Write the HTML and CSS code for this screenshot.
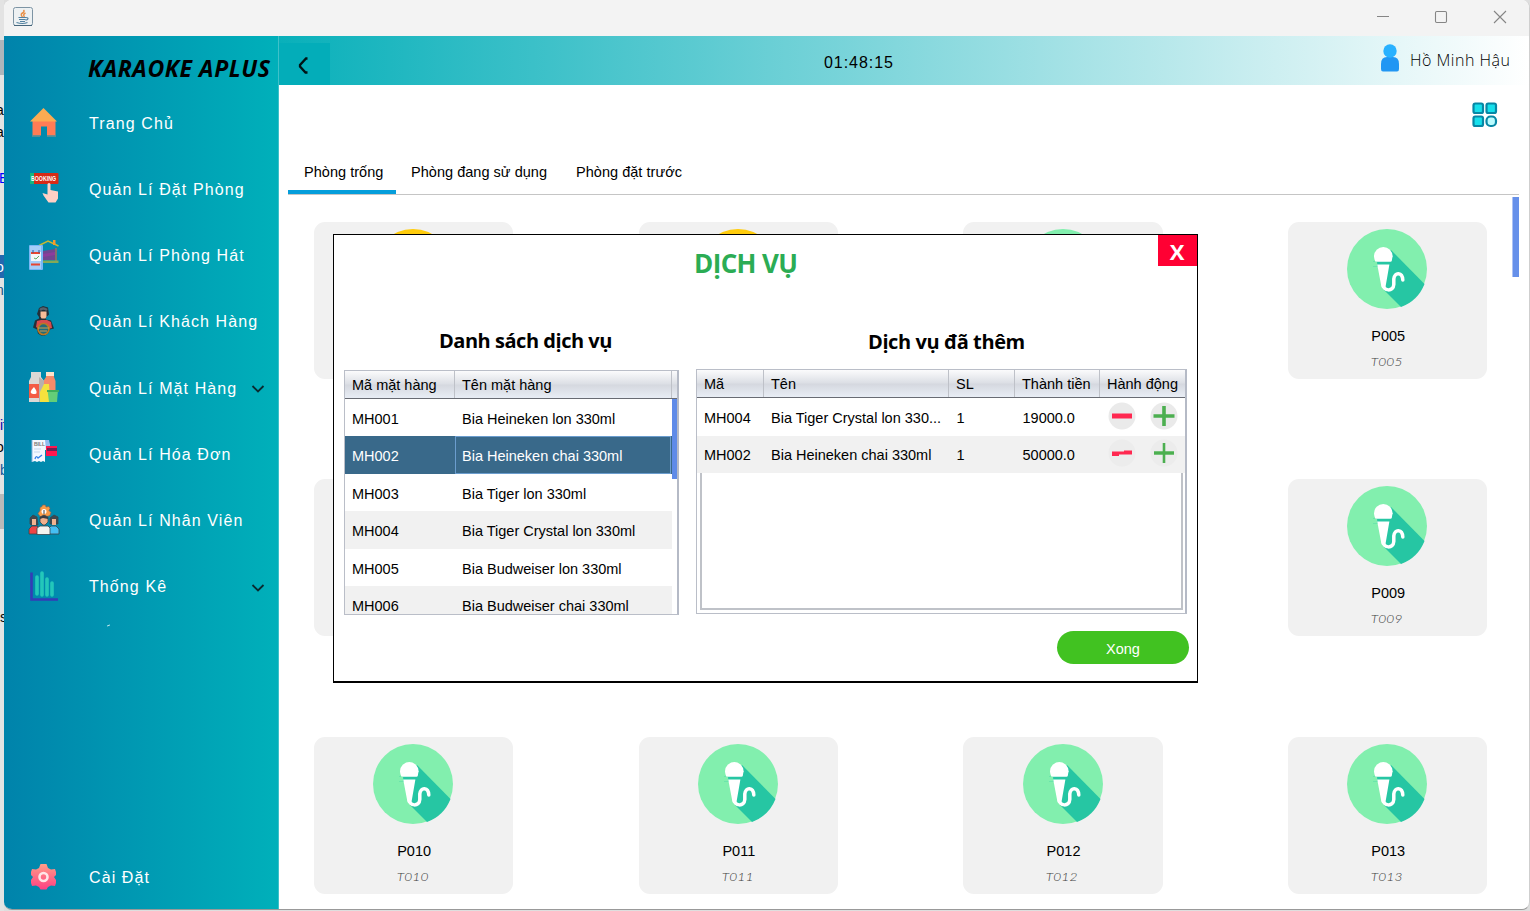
FILE: index.html
```html
<!DOCTYPE html>
<html lang="vi">
<head>
<meta charset="utf-8">
<title>Karaoke Aplus</title>
<link rel="stylesheet" href="styles.css">
</head>
<body>
<svg class="defs" width="0" height="0">
  <symbol id="mic" viewBox="0 0 80 80">
    <circle cx="40" cy="40" r="40" fill="#82efae"/>
    <path d="M44 21L77.500 55A40 40 0 0 1 54 78L37 61L30 34Z" fill="#26c6a3"/>
    <circle cx="36.300" cy="27.300" r="9.300" fill="#fff"/>
    <rect x="26" y="32.500" width="20" height="5" fill="#26c6a3"/>
    <path d="M26 32.500h4l.5 5h-4.500z" fill="#82efae"/>
    <path d="M27.500 27h17.800l-.8 5.500H28.200z" fill="#fff"/>
    <path d="M30.200 35.500h12.200L38.500 58q-3.500 3-4.200-1z" fill="#fff"/>
    <path d="M36 55C36 62.500 46.500 63 46.800 55.500V50C47.500 42.500 55.500 43 55.800 51" fill="none" stroke="#fff" stroke-width="3.500" stroke-linecap="round"/>
  </symbol>
  <symbol id="plain" viewBox="0 0 80 80"><circle cx="40" cy="40" r="40" fill="#ffcc0c"/></symbol>
  <symbol id="down" viewBox="0 0 14 8"><path d="M1.500 1L7 6.500L12.500 1" fill="none" stroke="#0a2a30" stroke-width="1.800"/></symbol>
  <symbol id="minus" viewBox="0 0 28 28"><circle cx="14" cy="14" r="13.500" fill="#eaeaea"/><path d="M4 14h20" stroke="#ff2850" stroke-width="5"/></symbol>
  <symbol id="minus2" viewBox="0 0 28 28"><circle cx="14" cy="14" r="13.500" fill="#ececec"/><path d="M4 12.500h12V11.500h8V15.500h-13v1.500H4z" fill="#ff2850"/></symbol>
  <symbol id="plus" viewBox="0 0 28 28"><circle cx="14" cy="14" r="13.500" fill="#eaeaea"/><path d="M3.500 14h21M14 4v20" stroke="#4caf50" stroke-width="3.600"/></symbol>
  <symbol id="plus2" viewBox="0 0 28 28"><circle cx="14" cy="14" r="13.500" fill="#ececec"/><path d="M4 14h20" stroke="#83c886" stroke-width="4"/><path d="M4 14h20M14 4v20" stroke="#4caf50" stroke-width="2.600"/></symbol>
</svg>

<div class="desktop">
  <div class="behind">
    <i class="block tab"></i><i class="block sel"></i><i class="block thumb"></i>
    <span class="frag f1">a</span><span class="frag f2">a</span><span class="frag f3">E</span>
    <span class="frag f4">o</span><span class="frag f5">n</span><span class="frag f6">it</span>
    <span class="frag f7">o</span><span class="frag f8">b</span><span class="frag f9">s</span>
  </div>
  <div class="window">
    <header class="titlebar">
      <svg class="java" width="20" height="20" viewBox="0 0 20 20">
        <rect x=".5" y=".5" width="19" height="18" rx="2" fill="#edf1f3" stroke="#7d94a4"/>
        <path d="M1 18.500h18" stroke="#46677d"/>
        <path d="M10.500 3Q12 4.500 9.500 6T9.500 10M12.500 6Q9.500 7.500 11.500 10" fill="none" stroke="#e8914a" stroke-width="1.500"/>
        <path d="M5.500 10.500h8M6 12.500h6.500M7 14.500h5M13 10.500q3 0 1.500 2l-2 .8M3.500 15.500q6 2 11 0" fill="none" stroke="#5382a1" stroke-width="1.200"/>
      </svg>
      <svg class="winbtns" width="134" height="16" viewBox="0 0 134 16" fill="none" stroke="#858585" stroke-width="1.100">
        <path d="M1 8.500h12"/><rect x="59.500" y="3.500" width="11" height="11" rx="1.200"/><path d="M118 3l12 12M130 3l-12 12"/>
      </svg>
    </header>
    <div class="main">
      <nav class="sidebar">
        <h1 class="brand">KARAOKE APLUS</h1>
        <div class="menu">
          <div class="item">
            <svg class="icon" viewBox="0 0 30 30"><path d="M3.500 14h23v14.500H18v-9h-6v9H3.500z" fill="#ff7c55" /><path d="M14.500 1L1 14.500h27z" fill="#fcab52"/><path d="M3 29h8M18 29h9" stroke="#6f8e91" stroke-width="1.500"/></svg>
            <span>Trang Chủ</span></div>
          <div class="item">
            <svg class="icon" viewBox="0 0 30 30"><rect x="1" width="28.500" height="11" rx="1" fill="#d72b16"/><path d="M1 0h4v11H1z" fill="#16b57e"/><text x="2" y="8.200" font-size="6.500" textLength="25" lengthAdjust="spacingAndGlyphs" class="booking">BOOKING</text><path d="M18.500 11q1.500-2 3 0v6l7.500 1.500v7l-2.500 4h-7l-5-7-1-2.500 5 1.500z" fill="#ffd0c5"/></svg>
            <span>Quản Lí Đặt Phòng</span></div>
          <div class="item">
            <svg class="icon" viewBox="0 0 30 30"><path d="M10 5.500L19 1l10.500 5" fill="none" stroke="#c5b833" stroke-width="1.400"/><path d="M24 0h2.500v5H24z" fill="#f79a2c"/><path d="M14 11l12-2v11H14z" fill="#704692"/><path d="M14 14l12-2v3l-12 2z" fill="#8c3c9c"/><path d="M27 8v13" stroke="#a96b59" stroke-width="1.500"/><path d="M13 20.500h16.500V23H13z" fill="#83a957"/><rect y="5" width="14" height="25" rx="1" fill="#78b7f5"/><path d="M1 6h11v23H1z" fill="#a5cdf7"/><rect x="2" y="12" width="10" height="9" fill="#f4f6f8"/><path d="M2 13h9M2 24.500h9" stroke="#e8452f" stroke-width="2"/><path d="M4 10v3M10 10v3" stroke="#335c9d"/><path d="M5 18l2 1 3-3" fill="none" stroke="#61aa67"/></svg>
            <span>Quản Lí Phòng Hát</span></div>
          <div class="item">
            <svg class="icon" viewBox="0 0 30 30"><path d="M10 2l4-2 5 1.500 1 7-3 3v2l5 1 3 8-4 1-2 4-3 2h-4l-3-2-1-4-4-2 2-7 4-2V11l-2-3z" fill="#233039"/><path d="M11.500 5.500h6v5l-1 2h-4l-1-2z" fill="#f7bd98"/><path d="M8 15l4-1h6l4 2 1 6-4 1-4-5-5 5-3-2z" fill="#d84b4e"/><circle cx="14.500" cy="23" r="5.500" fill="#236b78" stroke="#ba7921" stroke-width="1.700"/><path d="M9 22h11M11 25h7" stroke="#d19b50"/><path d="M11 4q3-3 7 0" stroke="#59626d" stroke-width="2.500" fill="none"/></svg>
            <span>Quản Lí Khách Hàng</span></div>
          <div class="item">
            <svg class="icon" viewBox="0 0 30 30"><path d="M2 0h10v5l3 4v21H0V9l2-4z" fill="#dcd8d5"/><path d="M10 5l5 4v21h-5z" fill="#b7b1ad"/><rect y="12" width="10" height="14" fill="#f45b45"/><path d="M5 15q6 8-1 7-5-1 1-7" fill="#fff"/><path d="M17 0h8v5l1.500 4v10H15V8l2-3z" fill="#f58b6a"/><path d="M17 0h8v4h-8z" fill="#ffe3ca"/><path d="M15 12h5l1 18H11V20z" fill="#f5e13d"/><path d="M18.500 18H29l-1 12h-8z" fill="#63ce78"/><path d="M18 18h12v2H18z" fill="#3cae5a"/></svg>
            <span>Quản Lí Mặt Hàng</span><svg class="chev" width="14" height="8"><use href="#down"/></svg></div>
          <div class="item">
            <svg class="icon" viewBox="0 0 30 30"><path d="M3 2h15l3 5v5H16v12l-2-1-2 1-2-1-2 1-2-1-3 1z" fill="#f4f8ff"/><path d="M16 2h4l1 5v5h-4z" fill="#91bbef"/><path d="M3 2v22" stroke="#86b3df"/><text x="5" y="7.500" font-size="5" class="bill">BILL</text><path d="M5 11h7M5 14h6" stroke="#c3d7ee"/><path d="M6 21q1-4 3-1l4-3" fill="none" stroke="#3480ea" stroke-width="1.300"/><path d="M17 8h11v10H17z" fill="#ff164f"/><path d="M18 10h10v3H18z" fill="#6c2454"/></svg>
            <span>Quản Lí Hóa Đơn</span></div>
          <div class="item">
            <svg class="icon" viewBox="0 0 30 30"><path d="M13.500 0h3l.5 2 3-.5 1 2-1 2 2 2-1 3-3 1-3 1-4-1-2-3 2-3 0-3 2-1z" fill="#f79b47" stroke="#7b655a" stroke-width=".7"/><circle cx="15" cy="6.500" r="2.500" fill="#fff"/><path d="M15 5v4" stroke="#444"/><g stroke="#38454c" stroke-width=".8"><path d="M0 29v-5l3-3h5l2 2v6z" fill="#ee4545"/><path d="M20 29v-6l2-2h5l3 3v5z" fill="#46bff3"/><path d="M8 29.500V23l3-2h8l2 2v6.500z" fill="#f4f3ef"/><path d="M1 19v-6l3-3 4 2 1 8H2zM21 19v-6l4-3 4 2v7z" fill="#42484e"/><path d="M11 17v-5l4-2 4 2v5l-3 3h-2z" fill="#f0b08c"/></g><path d="M3 14h4v6H3zM23 14h4v6h-4z" fill="#f2b390"/><path d="M11 14v-2l4-2 4 2v2l-5-1z" fill="#383d43"/></svg>
            <span>Quản Lí Nhân Viên</span></div>
          <div class="item">
            <svg class="icon" viewBox="0 0 30 30"><path d="M2.500 1.500v27H29" fill="none" stroke="#353bb6" stroke-width="2.600"/><path d="M8 6v17M13 2v22M18 8v16M23 12v12" stroke="#23c7ba" stroke-width="3.600" stroke-linecap="round"/></svg>
            <span>Thống Kê</span><svg class="chev" width="14" height="8"><use href="#down"/></svg></div>
        </div>
        <i class="accent"></i>
        <div class="item settings">
          <svg class="icon" viewBox="0 0 30 30"><defs><linearGradient id="gear" x2="0" y2="1"><stop stop-color="#ff9d87"/><stop offset="1" stop-color="#ff3f83"/></linearGradient></defs><path d="M11.500 2h6l1.500 4 3 1.500 4-.5 1 3v3l-2 2 2 3v3l-1 3-4-.5-3 1.500-1.500 2.500h-6L10 25l-3-1.500-4 .5-1-3v-3l2-3-2-2v-3l1-3 4 .5L10 6z" fill="url(#gear)"/><circle cx="14.500" cy="15" r="4" fill="none" stroke="#ffe4e6" stroke-width="2.600"/></svg>
          <span>Cài Đặt</span></div>
      </nav>
      <section class="content">
        <div class="topbar">
          <div class="back"><svg width="14" height="18" viewBox="0 0 14 18"><path d="M11.500 1.500H10L4 8v1.500l5.500 6h2" fill="none" stroke="#001315" stroke-width="2.300"/></svg></div>
          <time class="clock">01:48:15</time>
          <svg class="person" width="20" height="28" viewBox="0 0 20 28"><path d="M1 25v-5q0-7 6-7h6q6 0 6 7v5q0 2.500-2 2.500H3q-2 0-2-2.500z" fill="#2196f3"/><circle cx="10" cy="7" r="6.700" fill="#29b1ff"/></svg>
          <span class="user">Hồ Minh Hậu</span>
        </div>
        <div class="tools"><svg width="26" height="26" viewBox="0 0 26 26" stroke="#0787a5" stroke-width="2.200"><g fill="#16e0ec"><rect x="1.500" y="1.500" width="9.500" height="9.500" rx="1.800"/><rect x="14.500" y="1.500" width="9.500" height="9.500" rx="1.800"/><rect x="1.500" y="14.500" width="9.500" height="9.500" rx="1.800"/></g><rect x="14.500" y="14.500" width="9.500" height="9.500" rx="4" fill="#bafcff"/></svg></div>
        <div class="tabs"><span class="tab-item active">Phòng trống</span><span class="tab-item">Phòng đang sử dụng</span><span class="tab-item">Phòng đặt trước</span></div>
        <div class="rooms">
          <div class="grid">
            <div class="card"><svg><use href="#plain"/></svg></div>
            <div class="card"><svg><use href="#plain"/></svg></div>
            <div class="card"><svg><use href="#mic"/></svg></div>
            <div class="card"><svg><use href="#mic"/></svg><b>P005</b><em>T005</em></div>
            <div class="card"></div><div class="card"></div><div class="card"></div>
            <div class="card"><svg><use href="#mic"/></svg><b>P009</b><em>T009</em></div>
            <div class="card"><svg><use href="#mic"/></svg><b>P010</b><em>T010</em></div>
            <div class="card"><svg><use href="#mic"/></svg><b>P011</b><em>T011</em></div>
            <div class="card"><svg><use href="#mic"/></svg><b>P012</b><em>T012</em></div>
            <div class="card"><svg><use href="#mic"/></svg><b>P013</b><em>T013</em></div>
          </div>
          <i class="scroll"></i>
        </div>
      </section>
    </div>
  </div>
</div>

<div class="modal">
  <div class="modal-head"><h2>DỊCH VỤ</h2><button class="close">X</button></div>
  <div class="panels">
    <div class="panel left">
      <h3>Danh sách dịch vụ</h3>
      <div class="table list">
        <div class="thead"><span>Mã mặt hàng</span><span>Tên mặt hàng</span><span></span></div>
        <div class="body">
          <div class="lines">
            <div class="row"><span>MH001</span><span>Bia Heineken lon 330ml</span></div>
            <div class="row selected"><span>MH002</span><span>Bia Heineken chai 330ml</span></div>
            <div class="row"><span>MH003</span><span>Bia Tiger lon 330ml</span></div>
            <div class="row alt"><span>MH004</span><span>Bia Tiger Crystal lon 330ml</span></div>
            <div class="row"><span>MH005</span><span>Bia Budweiser lon 330ml</span></div>
            <div class="row alt"><span>MH006</span><span>Bia Budweiser chai 330ml</span></div>
          </div>
          <i class="thumb-bar"></i>
        </div>
      </div>
    </div>
    <div class="panel right">
      <h3>Dịch vụ đã thêm</h3>
      <div class="table added">
        <div class="thead"><span>Mã</span><span>Tên</span><span>SL</span><span>Thành tiền</span><span>Hành động</span></div>
        <div class="row"><span>MH004</span><span>Bia Tiger Crystal lon 330...</span><span>1</span><span>19000.0</span><span class="acts"><svg><use href="#minus"/></svg><svg><use href="#plus"/></svg></span></div>
        <div class="row alt"><span>MH002</span><span>Bia Heineken chai 330ml</span><span>1</span><span>50000.0</span><span class="acts"><svg><use href="#minus2"/></svg><svg><use href="#plus2"/></svg></span></div>
        <div class="empty"></div>
      </div>
    </div>
  </div>
  <button class="done">Xong</button>
</div>
</body>
</html>
```
FILE: styles.css
```css
* { box-sizing: border-box; }
body { margin: 0; width: 1530px; height: 911px; overflow: hidden; font: 14.5px "Liberation Sans", Arial, sans-serif; color: #000; position: relative; }
h1, h2, h3 { margin: 0; }
button { border: 0; padding: 0; font: inherit; color: #fff; }
.defs { position: absolute; }
.desktop { display: flex; height: 911px; background: #dedede; }
.behind { width: 4px; flex: none; position: relative; overflow: hidden; background: #e3e3e3; }
.block { position: absolute; left: 0; width: 4px; }
.tab { top: 40px; height: 35px; background: #adb5bb; }
.sel { top: 255px; height: 23px; background: #2368af; }
.thumb { top: 494px; height: 35px; background: #b9b9b9; }
.frag { position: absolute; left: -4px; font-size: 14px; line-height: 16px; }
.f1 { top: 102px; } .f2 { top: 124px; } .f3 { top: 170px; left: -1px; color: #00f; }
.f4 { top: 259px; color: #fff; } .f5 { top: 282px; color: #158; } .f6 { top: 417px; left: 0; color: #00a; }
.f7 { top: 439px; } .f8 { top: 462px; left: 0; color: #159; } .f9 { top: 609px; left: 0; }

.window { flex: 1; height: 910px; display: flex; flex-direction: column; border-radius: 8px; overflow: hidden; border-right: 1px solid #cfcfcf; border-bottom: 1px solid #999; background: #fff; }
.titlebar { height: 36px; flex: none; background: #f3f3f3; display: flex; justify-content: space-between; align-items: flex-start; padding: 7px 19px 0 9px; }
.winbtns { margin-top: 1px; }
.main { flex: 1; display: flex; min-height: 0; }

.sidebar { width: 275px; flex: none; display: flex; flex-direction: column; border-right: 1px solid #3fc1c9; background: linear-gradient(90deg, #0083ab, #00b0ba); }
.brand { height: 54px; padding: 17px 0 0 84px; font: italic 700 23px/30px "Open Sans", "Noto Sans", sans-serif; letter-spacing: .6px; white-space: nowrap; }
.item { height: 66.25px; display: flex; align-items: center; padding-left: 25px; color: #fff; font-size: 16px; letter-spacing: 1.1px; }
.item span { margin-left: 30px; padding-top: 1px; white-space: nowrap; }
.icon { width: 30px; height: 30px; flex: none; overflow: visible; margin-top: -2px; }
.booking { fill: #fff; font-weight: 700; letter-spacing: 0; }
.bill { fill: #777; font-weight: 700; letter-spacing: 0; }
.chev { margin: 2px 13px 0 auto; }
.accent { width: 3px; height: 1px; margin: 5px 0 0 103px; background: #d9f3f6; transform: rotate(-25deg); }
.settings { margin: auto 0 -2px; }

.content { flex: 1; display: flex; flex-direction: column; min-width: 0; }
.topbar { height: 49px; flex: none; display: flex; align-items: center; background: linear-gradient(90deg, #09b0ba, #fff); }
.back { width: 51px; height: 42px; align-self: flex-end; background: #03adb9; display: flex; align-items: center; padding: 3px 0 0 17px; }
.clock { margin: 4px 0 0 494px; width: 80px; font-size: 16px; letter-spacing: .95px; }
.person { margin: -5px 0 0 auto; }
.user { font: 300 16px "Open Sans", "Noto Sans", sans-serif; letter-spacing: .5px; margin: -2px 17px 0 10px; width: 102px; white-space: nowrap; }
.tools { height: 61px; flex: none; display: flex; justify-content: flex-end; padding: 17px 31px 0 0; }
.tabs { height: 49px; flex: none; margin: 0 10px 0 9px; display: flex; border-bottom: 1px solid #c5c5c5; }
.tab-item { padding: 18px 13px 0 16px; white-space: nowrap; letter-spacing: .03px; }
.active { width: 108px; padding-right: 0; border-bottom: 4px solid #059edb; margin-right: -1px; }
.rooms { flex: 1; display: flex; align-items: flex-start; justify-content: space-between; padding: 2px 10px 0 35px; }
.grid { display: grid; grid-template-columns: repeat(4, 199.300px); grid-auto-rows: 157px; gap: 100.400px 125.400px; padding-top: 25px; }
.card { background: #f1f1f1; border-radius: 11px; display: flex; flex-direction: column; align-items: center; padding-top: 7px; }
.card svg { width: 80px; height: 80px; margin-left: -1px; }
.card b { font-weight: 400; line-height: 18px; margin: 18px 0 0 1px; }
.card em { font: italic 300 11px/14px Lato, sans-serif; color: #404040; letter-spacing: .1px; margin: 10px 0 0 -2px; transform: scaleX(1.250); }
.scroll { width: 7px; height: 80px; background: #6690ea; border-left: 1px solid #acc2f5; }

.modal { position: absolute; left: 333px; top: 234px; width: 865px; height: 449px; background: #fff; border: 1px solid #000; border-bottom-width: 2px; display: flex; flex-direction: column; }
.modal-head { height: 84px; display: grid; grid-template-columns: 1fr 39px; }
.modal-head h2 { font: 700 26px/36px "Open Sans", "Noto Sans", sans-serif; color: #2bac54; padding: 10px 0 0 360px; letter-spacing: -.6px; }
.close { height: 31px; background: #ff0033; font: 700 22px/31px "Open Sans", sans-serif; padding: 1px 1px 0 0; }
.panels { display: flex; gap: 17px; padding: 0 10px; }
.panel { display: flex; flex-direction: column; }
.left { width: 335px; } .right { width: 491px; }
.panel h3 { font: 700 20px/28px "Open Sans", "Noto Sans", sans-serif; white-space: nowrap; letter-spacing: -.47px; }
.left h3 { padding: 8px 0 0 95px; height: 51px; }
.right h3 { padding: 9px 0 0 172px; height: 50px; letter-spacing: -.4px; }
.table { height: 245px; border: 1px solid #babec8; border-right: 2px solid #b5bac6; overflow: hidden; display: flex; flex-direction: column; }
.table span { white-space: nowrap; padding-left: 7px; }
.thead { height: 28px; flex: none; display: grid; border-bottom: 1px solid #686b73; background: linear-gradient(#fbfbfc, #dcdfe5 48%, #d5d8df 52%, #e8edf5); }
.thead span { height: 27px; line-height: 28px; border-right: 1px solid #bec1c8; }
.list .thead { grid-template-columns: 110px 217px 1fr; }
.list .thead span:last-child, .added .thead span:last-child { border: 0; }
.body { display: flex; }
.lines { width: 327px; flex: none; margin-top: -.3px; }
.row { height: 37.500px; flex: none; display: grid; grid-template-rows: 37.500px; line-height: 40px; background: #fff; }
.list .row { grid-template-columns: 110px 1fr; }
.alt { background: #f1f1f1; }
.selected { background: #39698a; color: #fff; }
.selected span:last-child { border: 1px solid #6b9dce; line-height: 38px; padding-left: 6px; margin-right: 1px; }
.thumb-bar { width: 6px; height: 80px; background: #5f8be8; }
.added .thead, .added .row { grid-template-columns: 67px 185px 66px 85px 1fr; }
.added .row { line-height: 40px; }
.added .row.alt { line-height: 38px; }
.added .row span:nth-child(3), .added .row span:nth-child(4) { padding-left: 7.500px; }
.added .row .acts { display: flex; gap: 14px; align-items: center; padding: 0 0 2px 8px; }
.acts svg { width: 28px; height: 28px; }
.empty { flex: 1; margin: 0 2px 3px 3px; border: 2px solid #bfc2c8; border-top: 0; }
.done { width: 132px; height: 33px; margin: 16px 8px 0 auto; border-radius: 17px; background: #41c221; padding-top: 2px; }
```
